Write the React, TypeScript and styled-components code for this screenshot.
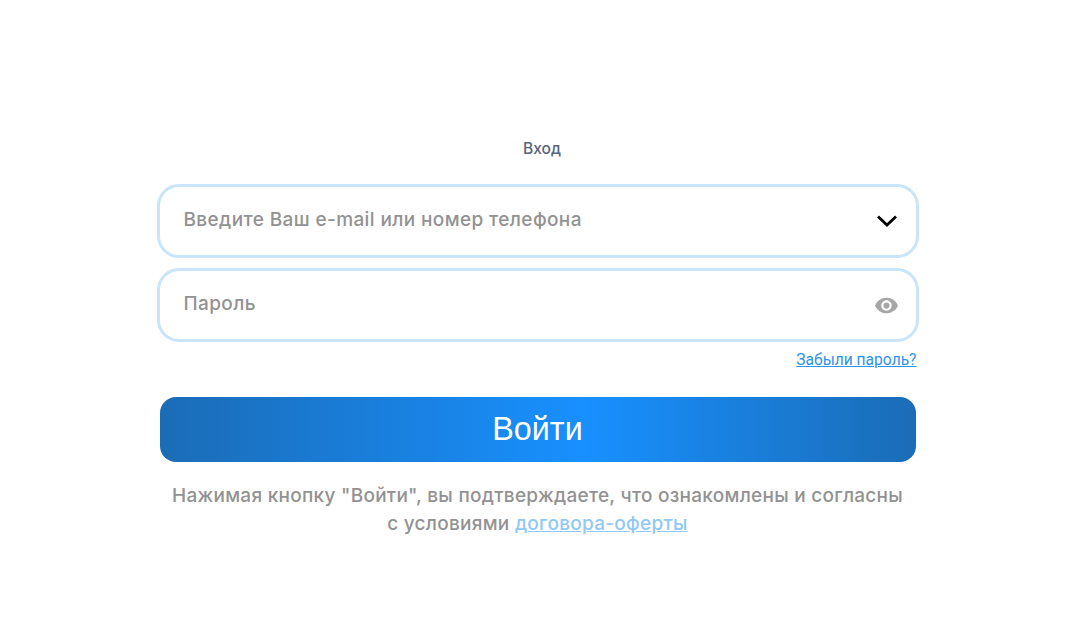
import styled, { createGlobalStyle } from 'styled-components'

const GlobalStyle = createGlobalStyle`
  html, body {
    margin: 0;
    padding: 0;
    background: #fff;
  }
  body {
    font-family: 'Inter', 'Liberation Sans', sans-serif;
  }
`

const Page = styled.div`
  width: 100%;
  min-height: 635px;
  display: flex;
  flex-direction: column;
  align-items: center;
  padding-top: 139px;
  box-sizing: border-box;
`

const Form = styled.form`
  width: 762px;
  display: flex;
  flex-direction: column;
`

const Title = styled.h1`
  margin: 0 0 26px;
  padding-left: 9px;
  font-size: 15.6px;
  line-height: 19px;
  font-weight: 500;
  text-align: center;
  color: #55657a;
`

const Field = styled.label`
  height: 74px;
  margin-bottom: 10px;
  padding: 0 18px 0 24px;
  box-sizing: border-box;
  display: flex;
  align-items: center;
  justify-content: space-between;
  border: 3px solid #c9e5fb;
  border-radius: 22px;
  background: #fff;
`

const Input = styled.input`
  flex: 1;
  min-width: 0;
  padding: 0 0 4px;
  border: 0;
  outline: 0;
  background: transparent;
  font-family: 'Inter', 'Liberation Sans', sans-serif;
  font-size: 19px;
  font-weight: 450;
  letter-spacing: 0.39px;
  color: #929292;

  &::placeholder {
    color: #929292;
    opacity: 1;
  }
`

const IconButton = styled.span<{ $shift?: number }>`
  display: flex;
  align-items: center;
  justify-content: center;
  flex: none;
  margin-right: ${props => props.$shift ?? 0}px;
`

const ForgotRow = styled.div`
  display: flex;
  justify-content: flex-end;
  padding-right: 2px;
  margin-top: -1px;
`

const ForgotLink = styled.a`
  font-family: 'Roboto', 'Liberation Sans', sans-serif;
  font-size: 15.6px;
  line-height: 18px;
  color: #2f93ea;
  text-decoration: underline;
`

const SubmitButton = styled.button`
  margin: 28px 3px 0;
  height: 65px;
  padding: 0;
  border: 0;
  border-radius: 16px;
  background: linear-gradient(90deg, #1b6cb6 0%, #1890ff 56%, #1b6cb6 100%);
  font-family: 'Liberation Sans', sans-serif;
  font-size: 32.3px;
  font-weight: 400;
  color: #fff;
`

const Terms = styled.p`
  margin: 20px 0 0;
  font-size: 19px;
  font-weight: 500;
  line-height: 28px;
  letter-spacing: 0.27px;
  text-align: center;
  color: #929292;
`

const TermsLink = styled.a`
  color: #90c8f8;
  text-decoration: underline;
`

export default function App() {
  return (
    <>
      <GlobalStyle />
      <Page>
        <Form>
          <Title>Вход</Title>
          <Field>
            <Input placeholder="Введите Ваш e-mail или номер телефона" />
            <IconButton>
              <svg width="22" height="14" viewBox="0 0 22 14" fill="none">
                <path d="M2 2.5 11 11l9-8.5" stroke="#000" strokeWidth="2.8" />
              </svg>
            </IconButton>
          </Field>
          <Field>
            <Input type="password" placeholder="Пароль" />
            <IconButton $shift={-1}>
              <svg width="25" height="25" viewBox="0 0 24 24" fill="#a6a6a6">
                <path d="M12 4.5C7 4.5 2.73 7.61 1 12c1.73 4.39 6 7.5 11 7.5s9.27-3.11 11-7.5c-1.73-4.39-6-7.5-11-7.5zM12 17c-2.76 0-5-2.24-5-5s2.24-5 5-5 5 2.24 5 5-2.24 5-5 5zm0-8c-1.66 0-3 1.34-3 3s1.34 3 3 3 3-1.34 3-3-1.34-3-3-3z" />
              </svg>
            </IconButton>
          </Field>
          <ForgotRow>
            <ForgotLink href="#">Забыли пароль?</ForgotLink>
          </ForgotRow>
          <SubmitButton type="button">Войти</SubmitButton>
          <Terms>
            Нажимая кнопку "Войти", вы подтверждаете, что ознакомлены и согласны
            <br />с условиями <TermsLink href="#">договора-оферты</TermsLink>
          </Terms>
        </Form>
      </Page>
    </>
  )
}
